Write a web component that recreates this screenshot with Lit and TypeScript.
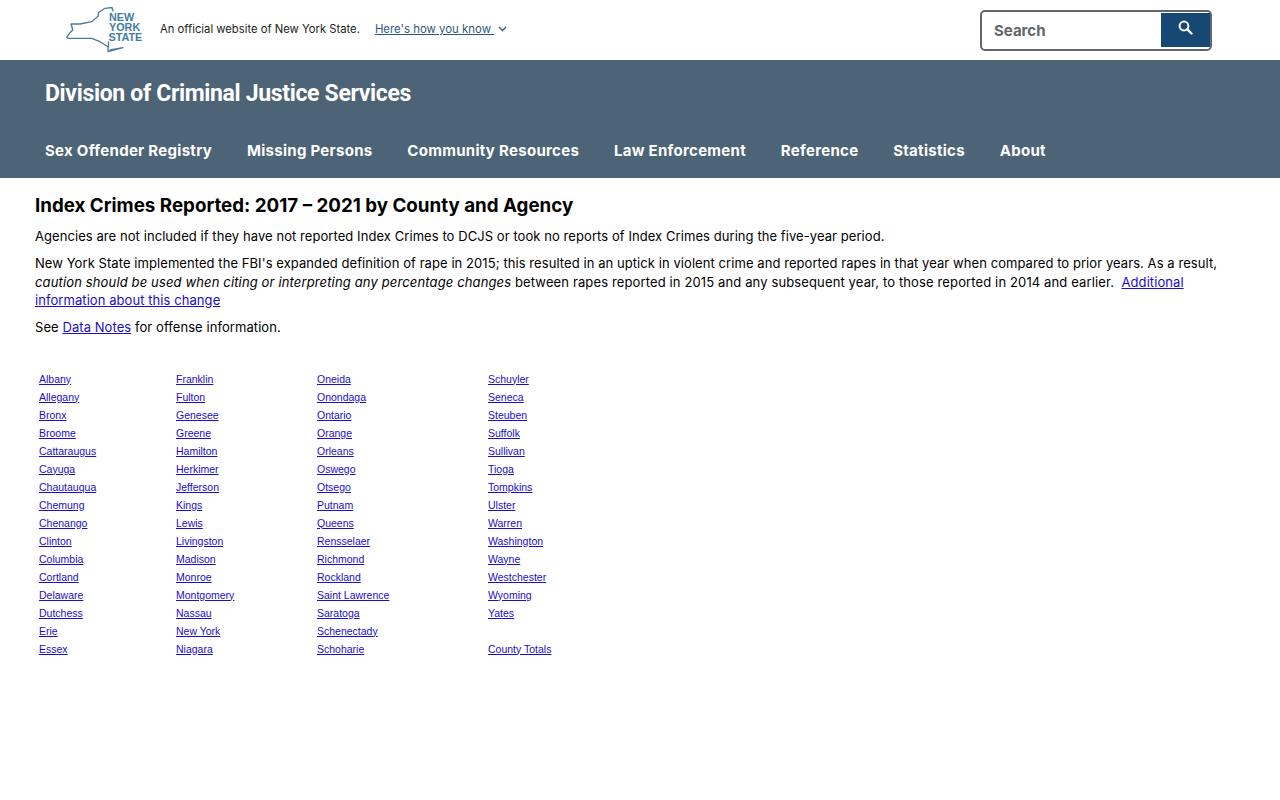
import { LitElement, html, css } from "lit";
import { customElement } from "lit/decorators.js";

const columns = [
  ["Albany","Allegany","Bronx","Broome","Cattaraugus","Cayuga","Chautauqua","Chemung","Chenango","Clinton","Columbia","Cortland","Delaware","Dutchess","Erie","Essex"],
  ["Franklin","Fulton","Genesee","Greene","Hamilton","Herkimer","Jefferson","Kings","Lewis","Livingston","Madison","Monroe","Montgomery","Nassau","New York","Niagara"],
  ["Oneida","Onondaga","Ontario","Orange","Orleans","Oswego","Otsego","Putnam","Queens","Rensselaer","Richmond","Rockland","Saint Lawrence","Saratoga","Schenectady","Schoharie"],
  ["Schuyler","Seneca","Steuben","Suffolk","Sullivan","Tioga","Tompkins","Ulster","Warren","Washington","Wayne","Westchester","Wyoming","Yates","","County Totals"],
];
const nav = ["Sex Offender Registry","Missing Persons","Community Resources","Law Enforcement","Reference","Statistics","About"];

@customElement("app-root")
export class AppRoot extends LitElement {
  static styles = css`
    :host { display: block; background: #fff; min-height: 800px; font-family: "Inter", "Liberation Sans", sans-serif; color: #000; }
    a { color: #1a0dcc; }
    .top { height: 60px; display: flex; align-items: center; padding: 0 68px 0 66px; box-sizing: border-box; }
    .logo { width: 76px; height: 46px; flex: none; display: block; }
    .official { margin-left: 18px; font-size: 11.25px; color: #1b1b1b; position: relative; top: -1px; }
    .know { margin-left: 15px; font-size: 11.4px; color: #2b5a7e; text-decoration: underline; white-space: pre; position: relative; top: -1px; }
    .chev { margin-left: 4px; width: 9px; height: 6px; display: block; position: relative; top: -1px; }
    .search { margin-left: auto; width: 232px; height: 41px; box-sizing: border-box; border: 2px solid #63666a; border-radius: 5px; display: flex; padding: 1px 0 2px 12px; }
    .search span { flex: 1; align-self: center; margin-top: 2px; font-size: 15px; font-weight: 700; color: #63666a; }
    .btn { width: 49px; background: #154973; display: flex; justify-content: center; padding-top: 7px; box-sizing: border-box; }
    .btn svg { width: 15px; height: 15px; display: block; }
    .band { background: #4d6477; height: 118px; box-sizing: border-box; padding: 21px 45px 0; color: #fff; }
    .agency { margin: 0; font: 700 23px/26px "Roboto", "Noto Sans", sans-serif; letter-spacing: -.335px; height: 26px; }
    .nav { display: flex; gap: 34.8px; margin-top: 34px; font-size: 15px; font-weight: 700; letter-spacing: .29px; line-height: 20px; }
    main { padding: 16px 35px 0; font-size: 13px; line-height: 18.5px; letter-spacing: .07px; }
    h1 { margin: 0 0 9px; font-size: 18.75px; line-height: 24px; font-weight: 700; letter-spacing: 0; }
    p { margin: 0 0 8.5px; }
    em { letter-spacing: .14px; }
    .wide { letter-spacing: .13px; }
    table { border-collapse: collapse; margin-top: 33px; font: 10.5px/18px "Liberation Sans", Arial, sans-serif; letter-spacing: 0; }
    td { padding: 0 0 0 4px; height: 18px; }
    td:nth-child(1) { width: 133px; }
    td:nth-child(2) { width: 137px; }
    td:nth-child(3) { width: 167px; }
    td:nth-child(4) { width: 100px; }
    .mark { fill: none; stroke: #4a7a9c; stroke-width: 1.3; stroke-linejoin: round; stroke-linecap: round; }
    .word { font: 700 10.8px "Liberation Sans", Arial, sans-serif; fill: #3f7ba6; }
  `;

  render() {
    const rows = columns[0].map((_, r) => columns.map(c => c[r]));
    return html`
      <div class="top">
        <svg class="logo" viewBox="0 0 76 46" aria-hidden="true">
          <path class="mark" d="M0.7 30.3 L4 25.7 L6.7 23 L5.7 19 L5 17 L14 17 L25.7 14.7 L32.3 9 L32.3 5.7 L39 1.3 L46 0.5 L47 4 M0.7 30.3 Q1 31.3 3 31.3 L25.7 31.3 L34 34.7 L42 39.7 L42 44.7 L57 40.7 L44 43 M42.5 35 L42.5 40" />
          <text class="word" x="43" y="14">NEW</text>
          <text class="word" x="43" y="24">YORK</text>
          <text class="word" x="42.5" y="34">STATE</text>
        </svg>
        <span class="official">An official website of New York State.</span>
        <a class="know">Here's how you know </a>
        <svg class="chev" viewBox="0 0 9 6"><path d="M1 1 L4.5 4.5 L8 1" fill="none" stroke="#2b5a7e" stroke-width="1.3"/></svg>
        <div class="search">
          <span>Search</span>
          <div class="btn">
            <svg viewBox="0 0 15 15"><circle cx="6" cy="6" r="4.4" fill="none" stroke="#fff" stroke-width="2"/><path d="M9.4 9.4 L13.5 13.5" stroke="#fff" stroke-width="2.4" stroke-linecap="round"/></svg>
          </div>
        </div>
      </div>
      <header class="band">
        <h2 class="agency">Division of Criminal Justice Services</h2>
        <nav class="nav">${nav.map(n => html`<span>${n}</span>`)}</nav>
      </header>
      <main>
        <h1>Index Crimes Reported: 2017 – 2021 by County and Agency</h1>
        <p>Agencies are not included if they have not reported Index Crimes to DCJS or took no reports of Index Crimes during the five-year period.</p>
        <p>New York State implemented the FBI's expanded definition of rape in 2015; this resulted in an uptick in violent crime and reported rapes in that year when compared to prior years. As a result, <em>caution should be used when citing or interpreting any percentage changes</em> <span class="wide">between rapes reported in 2015 and any subsequent year, to those reported in 2014 and earlier.</span>&nbsp; <a href="#">Additional information about this change</a></p>
        <p>See <a href="#">Data Notes</a> for offense information.</p>
        <table>
          ${rows.map(r => html`<tr>${r.map(c => html`<td>${c ? html`<a href="#">${c}</a>` : ""}</td>`)}</tr>`)}
        </table>
      </main>
    `;
  }
}
